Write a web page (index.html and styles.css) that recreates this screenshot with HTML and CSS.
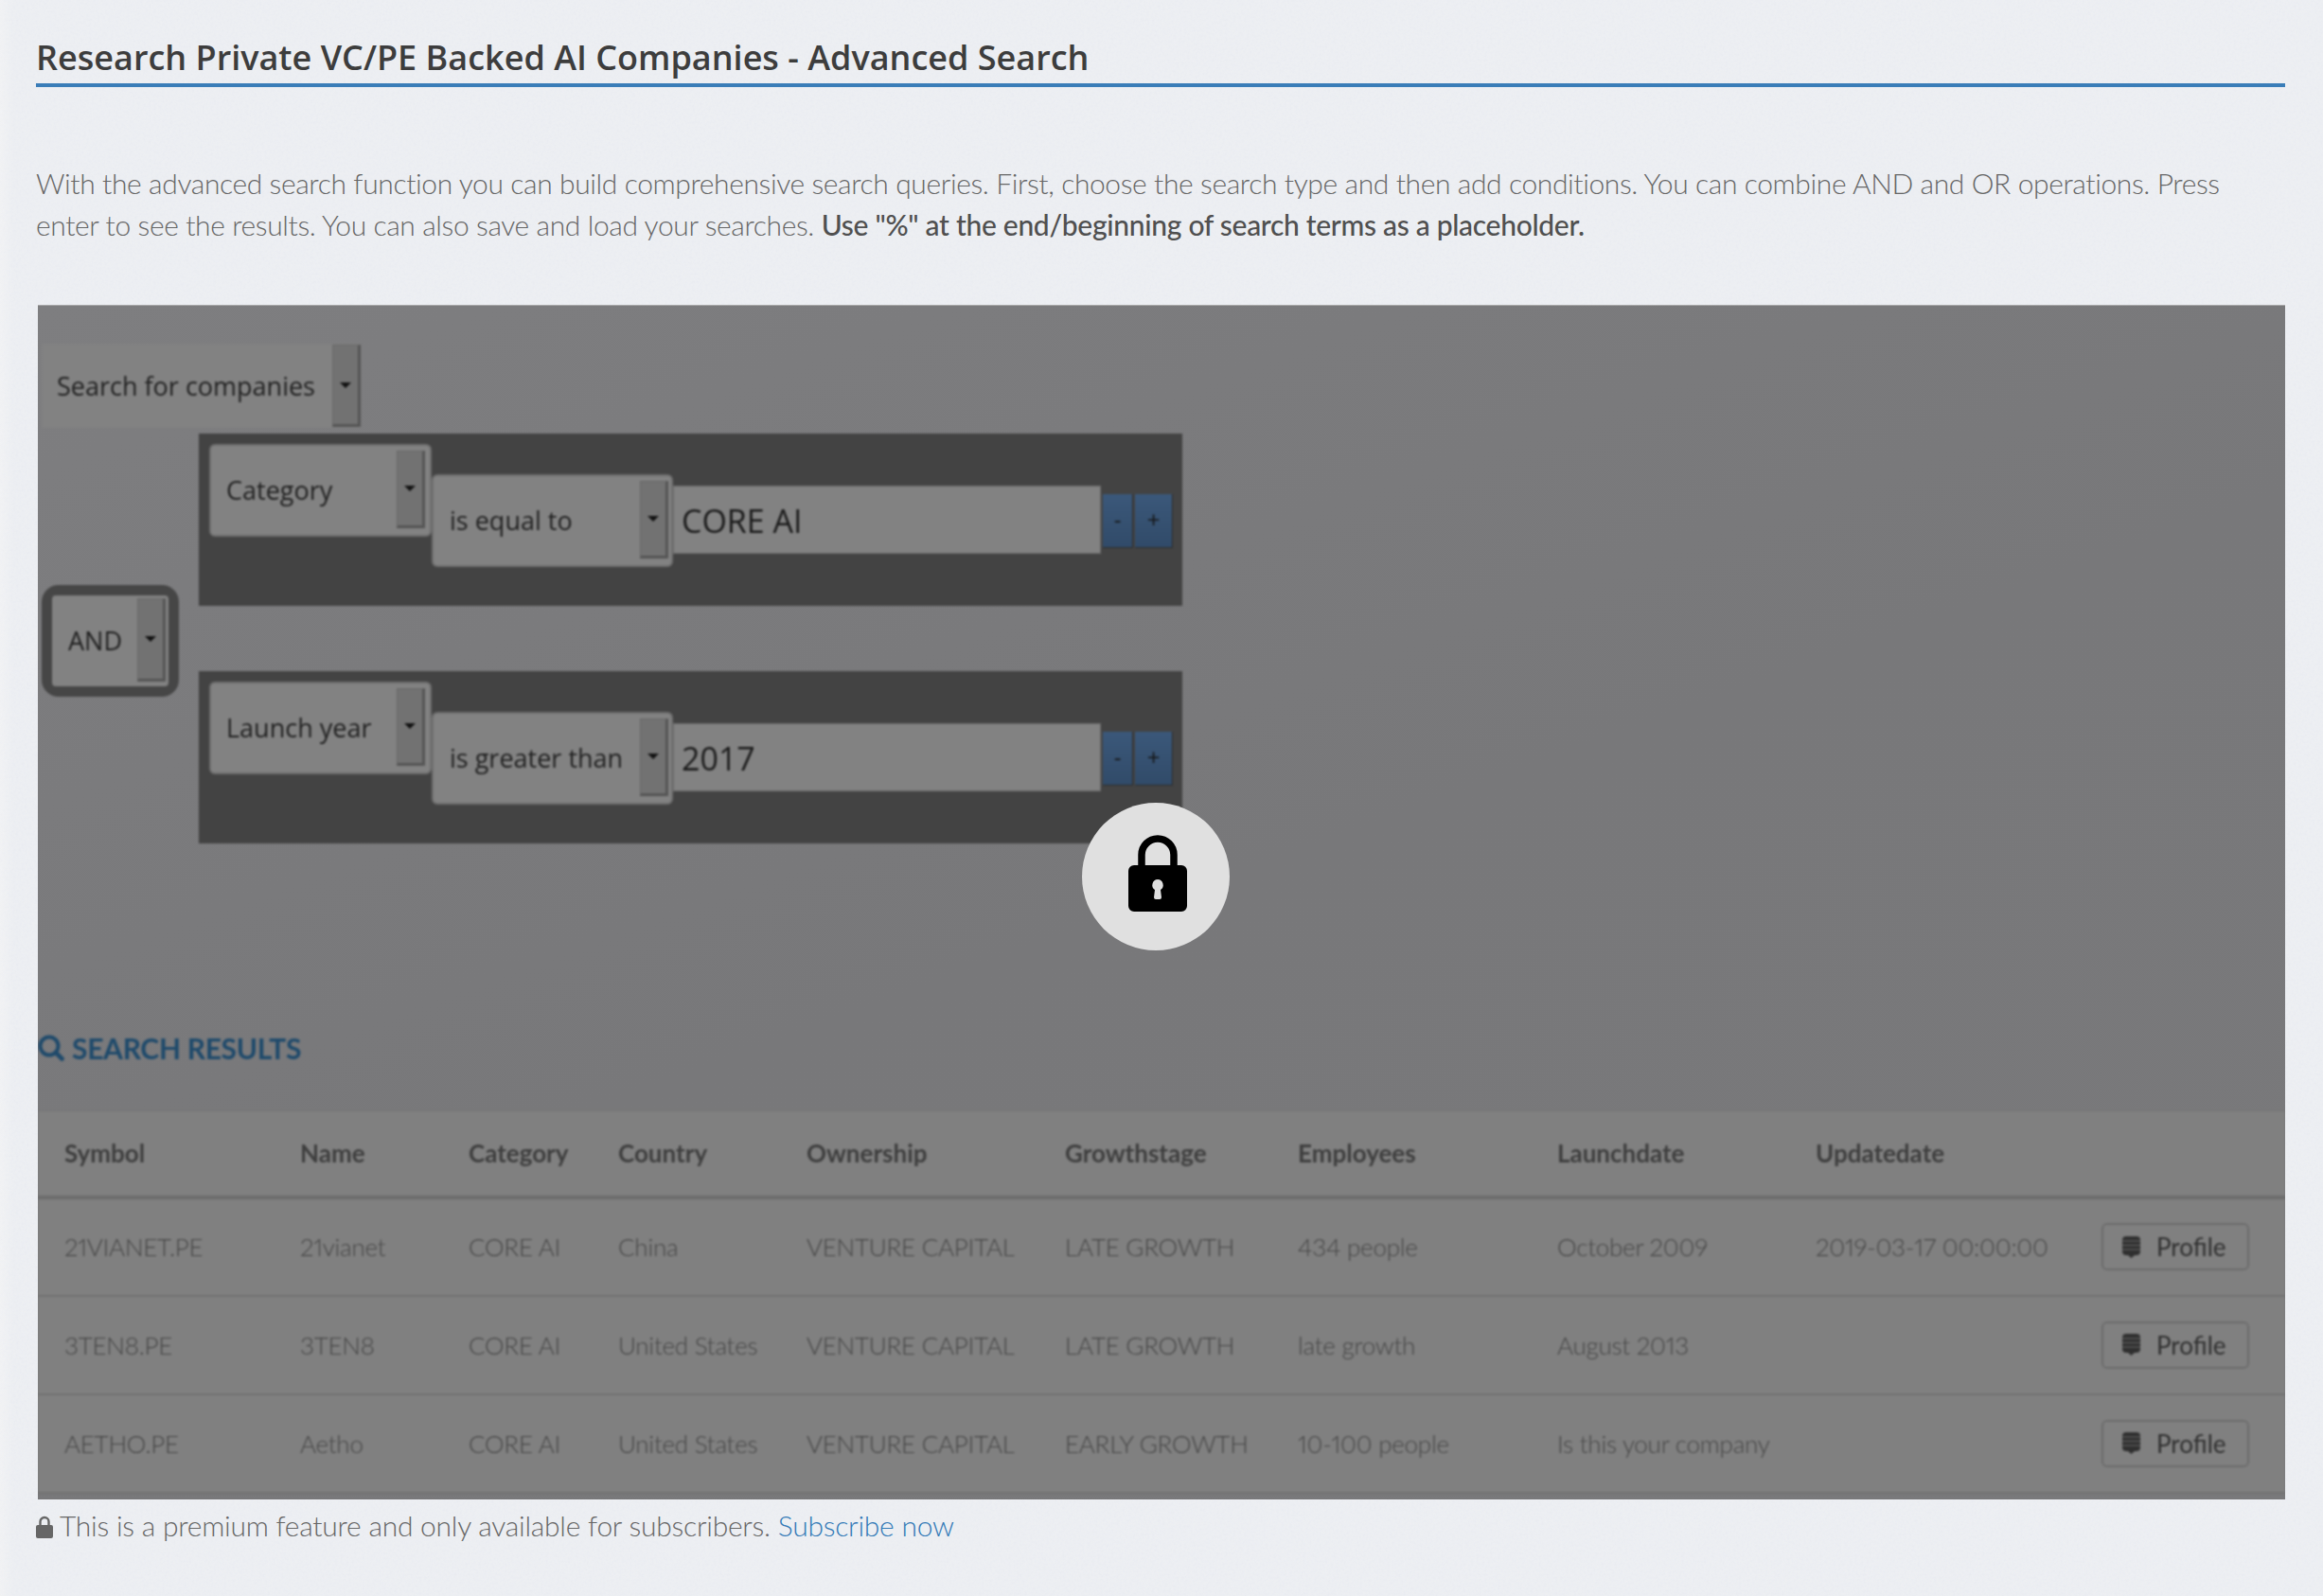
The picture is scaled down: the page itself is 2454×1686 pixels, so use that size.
FILE: index.html
```html
<!DOCTYPE html>
<html lang="en">
<head>
<meta charset="utf-8">
<title>Advanced Search</title>
<link rel="stylesheet" href="styles.css">
</head>
<body>
<main class="page">
  <h1 class="title">Research Private VC/PE Backed AI Companies - Advanced Search</h1>
  <p class="intro">With the advanced search function you can build comprehensive search queries. First, choose the search type and then add conditions. You can combine AND and OR operations. Press enter to see the results. You can also save and load your searches. <strong>Use "%" at the end/beginning of search terms as a placeholder.</strong></p>

  <section class="locked">
    <div class="locked-content">
      <div class="select select-type"><span class="select-label">Search for companies</span><span class="select-btn"><i class="caret"></i></span></div>

      <div class="query">
        <div class="and-wrap">
          <div class="select select-and"><span class="select-label">AND</span><span class="select-btn"><i class="caret"></i></span></div>
        </div>
        <div class="conds">
          <div class="cond">
            <div class="select select-field"><span class="select-label">Category</span><span class="select-btn"><i class="caret"></i></span></div>
            <div class="select select-op"><span class="select-label">is equal to</span><span class="select-btn"><i class="caret"></i></span></div>
            <div class="value">CORE AI</div>
            <div class="step step-minus">-</div>
            <div class="step step-plus">+</div>
          </div>
          <div class="cond">
            <div class="select select-field"><span class="select-label">Launch year</span><span class="select-btn"><i class="caret"></i></span></div>
            <div class="select select-op"><span class="select-label">is greater than</span><span class="select-btn"><i class="caret"></i></span></div>
            <div class="value">2017</div>
            <div class="step step-minus">-</div>
            <div class="step step-plus">+</div>
          </div>
        </div>
      </div>

      <h2 class="results-title">
        <svg class="search-icon" viewBox="0 0 28 28" aria-hidden="true"><circle cx="12" cy="12" r="9.5" fill="none" stroke="currentColor" stroke-width="4"/><path d="M19 19l6.5 6.5" stroke="currentColor" stroke-width="4.6" stroke-linecap="round"/></svg>
        SEARCH RESULTS
      </h2>

      <table class="results">
        <colgroup>
          <col class="c-symbol"><col class="c-name"><col class="c-category"><col class="c-country"><col class="c-owner"><col class="c-growth"><col class="c-emp"><col class="c-launch"><col class="c-update"><col class="c-action">
        </colgroup>
        <thead>
          <tr><th>Symbol</th><th>Name</th><th>Category</th><th>Country</th><th>Ownership</th><th>Growthstage</th><th>Employees</th><th>Launchdate</th><th>Updatedate</th><th></th></tr>
        </thead>
        <tbody>
          <tr><td>21VIANET.PE</td><td>21vianet</td><td>CORE AI</td><td>China</td><td>VENTURE CAPITAL</td><td>LATE GROWTH</td><td>434 people</td><td>October 2009</td><td>2019-03-17 00:00:00</td><td><span class="profile"><svg class="profile-icon" viewBox="0 0 19 23" aria-hidden="true"><path d="M4 0h11a4 4 0 0 1 4 4v12a4 4 0 0 1-4 4h-2l-3.500 3-3.500-3H4a4 4 0 0 1-4-4V4a4 4 0 0 1 4-4z"/><path class="profile-lines" d="M0 5h19M0 9.500h19M0 14h19"/></svg>Profile</span></td></tr>
          <tr><td>3TEN8.PE</td><td>3TEN8</td><td>CORE AI</td><td>United States</td><td>VENTURE CAPITAL</td><td>LATE GROWTH</td><td>late growth</td><td>August 2013</td><td></td><td><span class="profile"><svg class="profile-icon" viewBox="0 0 19 23" aria-hidden="true"><path d="M4 0h11a4 4 0 0 1 4 4v12a4 4 0 0 1-4 4h-2l-3.500 3-3.500-3H4a4 4 0 0 1-4-4V4a4 4 0 0 1 4-4z"/><path class="profile-lines" d="M0 5h19M0 9.500h19M0 14h19"/></svg>Profile</span></td></tr>
          <tr><td>AETHO.PE</td><td>Aetho</td><td>CORE AI</td><td>United States</td><td>VENTURE CAPITAL</td><td>EARLY GROWTH</td><td>10-100 people</td><td>Is this your company</td><td></td><td><span class="profile"><svg class="profile-icon" viewBox="0 0 19 23" aria-hidden="true"><path d="M4 0h11a4 4 0 0 1 4 4v12a4 4 0 0 1-4 4h-2l-3.500 3-3.500-3H4a4 4 0 0 1-4-4V4a4 4 0 0 1 4-4z"/><path class="profile-lines" d="M0 5h19M0 9.500h19M0 14h19"/></svg>Profile</span></td></tr>
        </tbody>
      </table>
    </div>

    <div class="lock-badge">
      <svg class="lock-icon" viewBox="0 0 62 81" aria-hidden="true">
        <path d="M14 36V21a17 17 0 0 1 34 0v15" fill="none" stroke="#000" stroke-width="7.500"/>
        <path fill-rule="evenodd" d="M6 32h50a6 6 0 0 1 6 6v37a6 6 0 0 1-6 6H6a6 6 0 0 1-6-6V38a6 6 0 0 1 6-6zM31 47a6 6 0 0 0-3 11l-1 8a2 2 0 0 0 2 2h4a2 2 0 0 0 2-2l-1-8a6 6 0 0 0-3-11z"/>
      </svg>
    </div>
  </section>

  <p class="premium">
    <svg class="premium-lock" viewBox="0 0 18 24" aria-hidden="true"><path d="M4.500 11V6.500a4.500 4.500 0 0 1 9 0V11" fill="none" stroke="currentColor" stroke-width="2.400"/><rect x="0" y="10" width="18" height="14" rx="2" fill="currentColor"/></svg>This is a premium feature and only available for subscribers. <a class="subscribe" href="#">Subscribe now</a>
  </p>
</main>
</body>
</html>
```

FILE: styles.css
```css
* { box-sizing: border-box; }
html, body { margin: 0; height: 100%; }
body {
  background-color: #eceef2;
  background-image:
    url("data:image/svg+xml,%3Csvg xmlns='http://www.w3.org/2000/svg' width='400' height='400'%3E%3Cfilter id='n'%3E%3CfeTurbulence type='fractalNoise' baseFrequency='0.35' numOctaves='3'/%3E%3CfeColorMatrix values='0 0 0 0 0.55 0 0 0 0 0.56 0 0 0 0 0.6 0 0 0 0.1 0'/%3E%3C/filter%3E%3Crect width='400' height='400' filter='url(%23n)'/%3E%3C/svg%3E"),
    linear-gradient(90deg, #f3f4f6 0, #eef0f4 14px);
  font-family: "Lato", "Liberation Sans", sans-serif;
  color: #666;
}
.page { padding: 0 40px 0 38px; }

.title {
  margin: 0;
  padding-top: 36px;
  height: 92px;
  border-bottom: 4px solid #3a7db8;
  font: 600 36px/50px "Open Sans", sans-serif;
  color: #3d3d3d;
}
.intro {
  margin: 79px 0 0;
  font-weight: 300;
  font-size: 30px;
  line-height: 44px;
  letter-spacing: -0.39px;
  color: #666;
}
.intro strong { font-weight: 500; color: #505050; letter-spacing: -0.3px; }

.locked {
  position: relative;
  margin: 63px 0 0 2px;
  height: 1262px;
  background: linear-gradient(160deg, #7e7e80 0, #78787a 50%, #79797b 100%);
  overflow: hidden;
  box-shadow: inset 0 1px 0 #a8a8a8;
}
.locked-content {
  height: 100%;
  padding-top: 41px;
  filter: blur(1px);
}

.select {
  display: flex;
  align-items: stretch;
  background: #828282;
  border-radius: 4px;
  font: 400 27px "Open Sans", sans-serif;
  color: #1f1f1f;
}
.select-label { flex: 1; align-self: center; white-space: nowrap; }
.select-btn {
  width: 30px;
  display: flex;
  align-items: center;
  justify-content: center;
  background: #727272;
  border: 1px solid #686868;
  border-right: 3px solid #555;
  border-bottom: 3px solid #555;
}
.caret {
  width: 0;
  height: 0;
  border-left: 6px solid transparent;
  border-right: 6px solid transparent;
  border-top: 6px solid #111;
}

.select-type {
  width: 337px;
  height: 89px;
  margin-left: 4px;
  padding-left: 16px;
  border-radius: 0;
}
.select-type .select-btn { margin: 1px 0; }

.query { display: flex; align-items: center; margin-top: 6px; }
.and-wrap {
  width: 145px;
  height: 118px;
  margin: 5px 0 0 4px;
  border: 11px solid #464646;
  border-radius: 18px;
  background: #828282;
}
.select-and { height: 100%; padding: 0 3px 2px 17px; font-size: 27px; }
.select-and .select-btn { margin: 3px 0; }

.conds {
  display: flex;
  flex-direction: column;
  gap: 69px;
  margin-left: 21px;
}
.cond {
  display: flex;
  align-items: flex-start;
  width: 1039px;
  height: 182px;
  padding: 11px 0 0 11px;
  background: #434343;
}
.select-field {
  width: 235px;
  height: 98px;
  padding: 0 5px 2px 16px;
  border: 2px solid #6e6e6e;
  border-radius: 6px;
}
.select-field .select-btn { margin: 5px 0; }
.select-op {
  width: 255px;
  height: 98px;
  margin-top: 32px;
  padding: 0 3px 2px 17px;
  border: 2px solid #6e6e6e;
  border-radius: 6px;
}
.select-op .select-btn { margin: 5px 0; }
.value {
  width: 452px;
  height: 72px;
  margin: 44px 2px 0 0;
  padding-left: 8px;
  background: #828282;
  border: 1px solid #6c6c6c;
  font: 400 34px/72px "Open Sans", sans-serif;
  color: #1a1a1a;
}
.step {
  height: 57px;
  margin-top: 53px;
  background: linear-gradient(180deg, #3b587a, #314b69);
  border-right: 1px solid #2c2c2c;
  border-bottom: 1px solid #2c2c2c;
  text-align: center;
  font: 400 24px/54px "Open Sans", sans-serif;
  color: #141414;
}
.step-minus { width: 32px; margin-right: 2px; }
.step-plus { width: 40px; }

.results-title {
  display: flex;
  align-items: center;
  gap: 8px;
  margin: 192px 0 0;
  height: 48px;
  font-weight: 700;
  font-size: 30px;
  line-height: 48px;
  letter-spacing: -0.3px;
  color: #1f4a6b;
}
.search-icon { width: 28px; height: 28px; flex: none; }

.results {
  width: 100%;
  margin-top: 42px;
  table-layout: fixed;
  border-collapse: collapse;
  background: #808080;
  font-size: 26px;
  color: #444;
}
.c-symbol { width: 277px; }
.c-name { width: 178px; }
.c-category { width: 158px; }
.c-country { width: 199px; }
.c-owner { width: 273px; }
.c-growth { width: 246px; }
.c-emp { width: 274px; }
.c-launch { width: 273px; }
.c-update { width: 302px; }
.results th, .results td { padding: 0; text-align: left; white-space: nowrap; }
.results th:first-child, .results td:first-child { padding-left: 28px; }
.results th {
  height: 91px;
  font-weight: 700;
  color: #3e3e3e;
  border-top: 1px solid #757575;
  border-bottom: 4px solid #6c6c6c;
}
.results td {
  height: 104px;
  font-weight: 300;
  letter-spacing: -0.25px;
  font-variant-numeric: proportional-nums;
  border-bottom: 2px solid #717171;
}
.profile {
  display: inline-flex;
  align-items: center;
  width: 156px;
  height: 50px;
  padding-left: 20px;
  border: 2px solid #6c6c6c;
  border-radius: 6px;
  font-weight: 400;
  letter-spacing: 0;
  color: #2f2f2f;
}
.profile-icon { width: 19px; height: 23px; margin-right: 17px; fill: #2f2f2f; }
.profile-lines { fill: none; stroke: #6a6a6a; stroke-width: 1.200; }

.lock-badge {
  position: absolute;
  left: 1103px;
  top: 526px;
  width: 156px;
  height: 156px;
  display: flex;
  align-items: center;
  justify-content: center;
  border-radius: 50%;
  background: #e0e0e0;
}
.lock-icon { width: 62px; height: 81px; margin: 0 0 7px 3px; }

.premium {
  margin: 9px 0 0;
  font-weight: 300;
  font-size: 30px;
  line-height: 36px;
  letter-spacing: -0.25px;
  color: #666;
}
.premium-lock { width: 18px; height: 24px; margin-right: 7px; color: #666; vertical-align: -2px; }
.subscribe { color: #337ab7; text-decoration: none; }
```
